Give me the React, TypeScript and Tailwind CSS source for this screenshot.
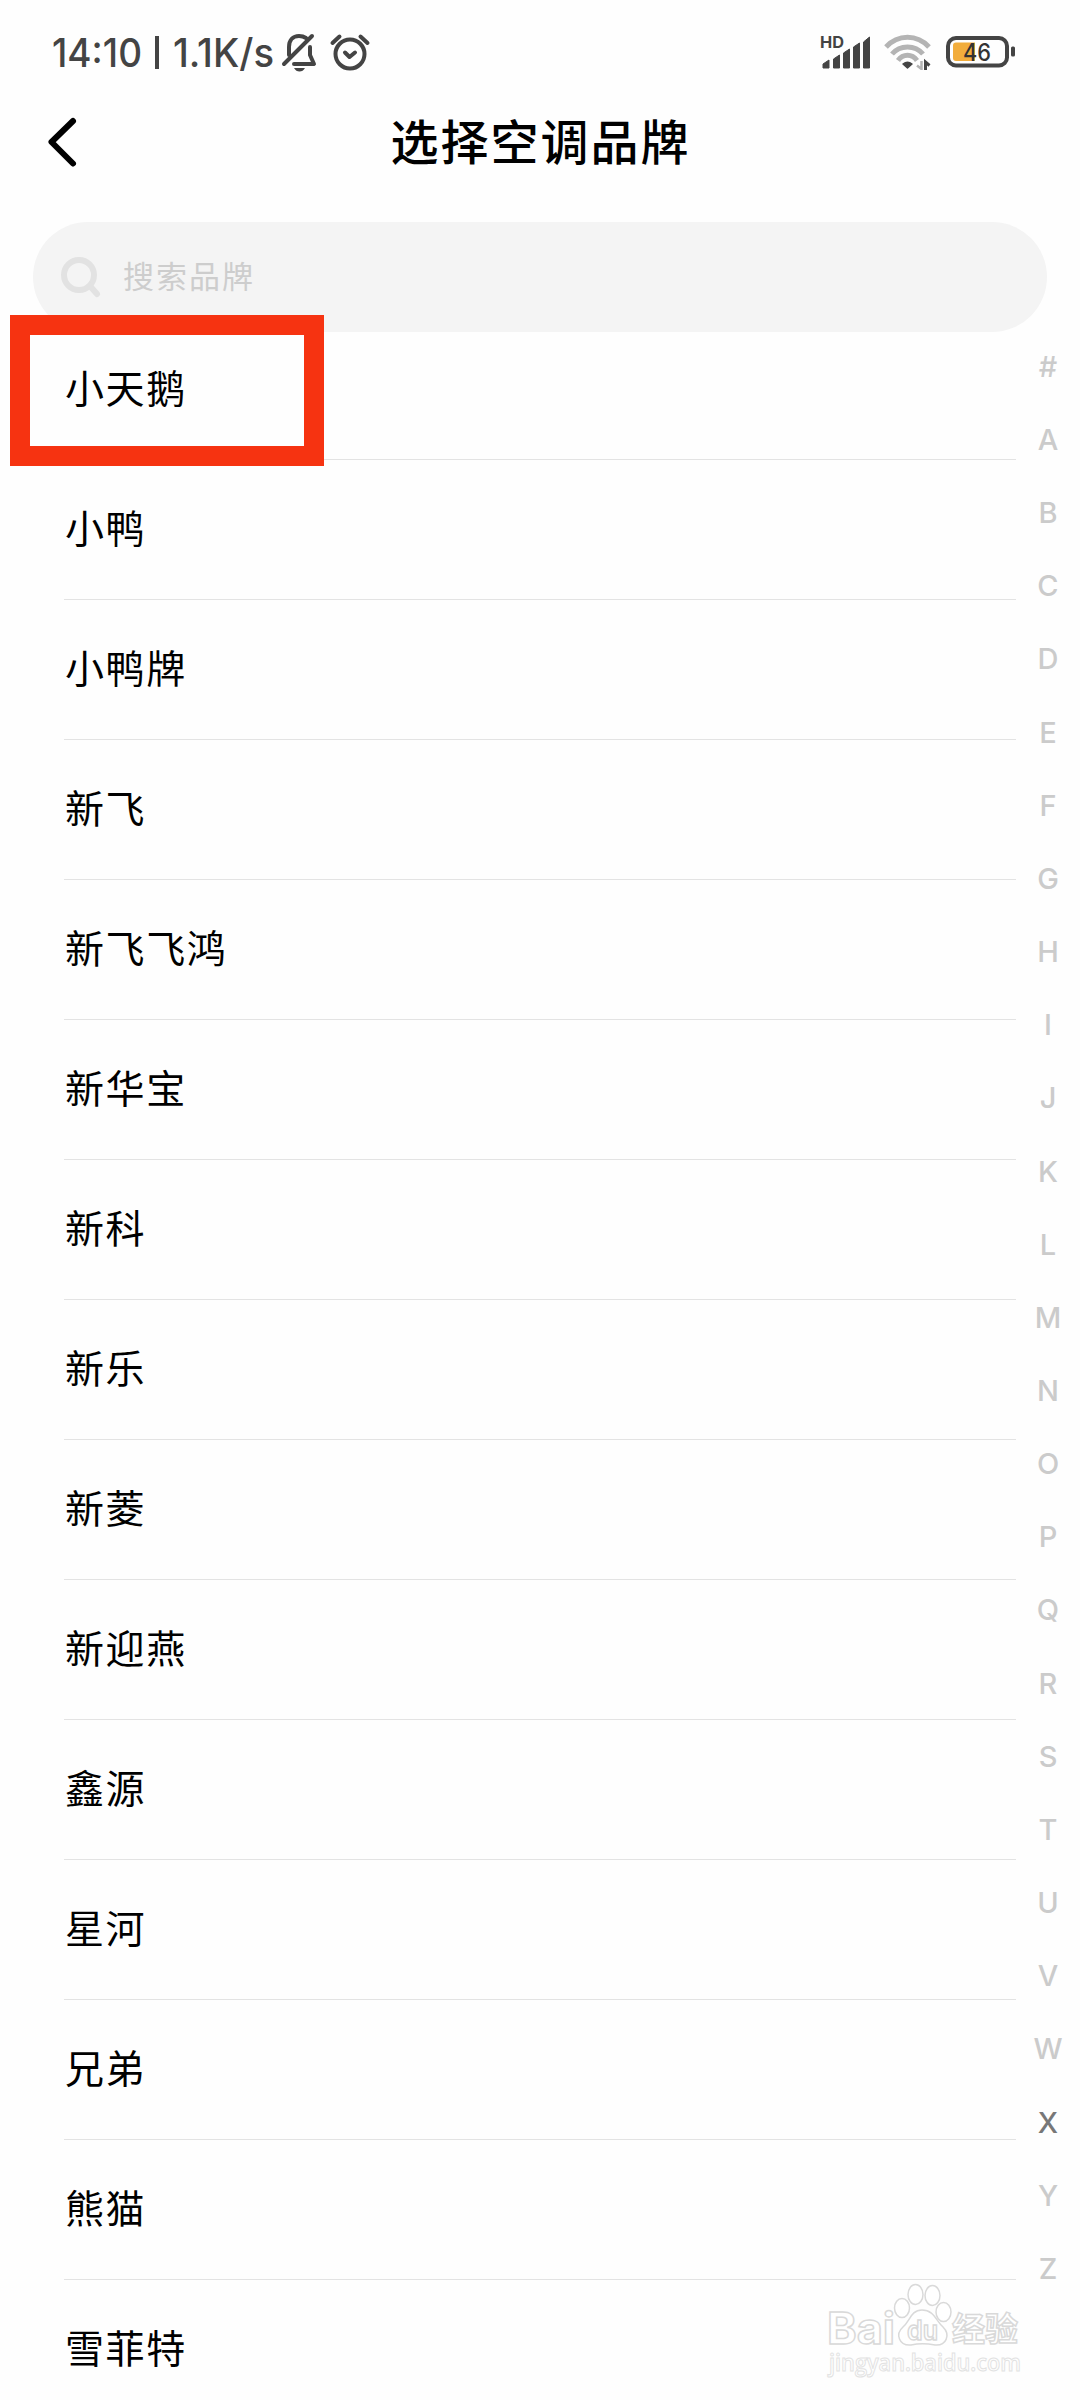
const brands = [
  '小天鹅',
  '小鸭',
  '小鸭牌',
  '新飞',
  '新飞飞鸿',
  '新华宝',
  '新科',
  '新乐',
  '新菱',
  '新迎燕',
  '鑫源',
  '星河',
  '兄弟',
  '熊猫',
  '雪菲特',
]

const letters = '#ABCDEFGHIJKLMNOPQRSTUVWXYZ'.split('')
const activeLetter = 'X'

function StatusBar() {
  return (
    <div className="flex h-[104px] shrink-0 items-center justify-between pr-[64px] pl-[50px] font-['Inter',sans-serif] text-[#444]">
      <div className="flex items-center">
        <svg className="h-[60px] w-[227px]" viewBox="-2 -11 227 60" fill="#444">
          <text x="0" y="34" fontSize="39" fontWeight="500" textLength="90" lengthAdjust="spacingAndGlyphs">14:10</text>
          <rect x="103" y="3" width="4" height="33" />
          <text x="121" y="34" fontSize="39" fontWeight="500" textLength="101" lengthAdjust="spacingAndGlyphs">1.1K/s</text>
        </svg>
        <svg className="ml-[4px] h-[40px] w-[36px]" viewBox="0 0 36 40" fill="none" stroke="#444" strokeWidth="4" strokeLinecap="round" strokeLinejoin="round">
          <path d="M8 23V15C8 8 12 4 18 4Q22 4 25 6" />
          <path d="M29 15V23L33 32H13" />
          <path d="M3 32L31 4" />
          <path d="M13 36H24Q22 39.500 18.500 39.500Q15 39.500 13 36Z" fill="#444" stroke="none" />
        </svg>
        <svg className="ml-[12px] h-[40px] w-[42px]" viewBox="0 0 42 40" fill="none" stroke="#444" strokeWidth="4" strokeLinecap="round" strokeLinejoin="round">
          <circle cx="21" cy="22" r="14.500" />
          <path d="M16 20.500L20.500 25L26 20.500M3.500 11L10.500 4.500M31.500 4.500L38.500 11" />
        </svg>
      </div>
      <div className="flex items-center">
        <svg className="h-[48px] w-[54px]" viewBox="-2 -6 54 48" fill="#444">
          <text x="0" y="14" fontSize="16" fontWeight="700" textLength="24" lengthAdjust="spacingAndGlyphs">HD</text>
          <path d="M3 34V30L9 26V34ZM13.500 34V25L19.500 21V34ZM23.500 34V19L29.500 15V34ZM33.500 34V13L39.500 9V34ZM43.500 34V8L49.500 3V34Z" strokeWidth="1" stroke="#444" strokeLinejoin="round" />
        </svg>
        <svg className="ml-[12px] h-[36px] w-[48px]" viewBox="0 0 48 36" fill="none" stroke="#b4b4b4" strokeWidth="5">
          <path d="M2 13C14 0 33 0 45 13" />
          <path d="M8 20C16 10.500 31 10.500 39 20" />
          <path d="M14 26.500C19 19.500 28 19.500 33 26.500" />
          <path d="M19 30Q23.500 26.500 28 30L23.500 34Z" fill="#444" stroke="#444" strokeWidth="1.500" strokeLinejoin="round" />
          <path d="M37.500 27V35L33 31.500" strokeWidth="2.500" />
          <path d="M41.500 36V28L45.500 31.500" stroke="#444" strokeWidth="3" />
        </svg>
        <svg className="ml-[14px] h-[32px] w-[70px]" viewBox="0 0 70 32">
          <rect x="2" y="2" width="59" height="27.500" rx="8" fill="none" stroke="#444" strokeWidth="4" />
          <path d="M10 6.500H29V25H10Q7 25 7 22V9.500Q7 6.500 10 6.500Z" fill="#f2ad3c" />
          <rect x="65" y="10.500" width="4" height="10" rx="1.500" fill="#444" />
          <text x="17" y="24.500" fontSize="24" fontWeight="500" fill="#333" textLength="28" lengthAdjust="spacingAndGlyphs">46</text>
        </svg>
      </div>
    </div>
  )
}

function Watermark() {
  return (
    <svg
      className="absolute right-[56px] bottom-[10px] h-[110px] w-[200px]"
      viewBox="0 0 200 110"
      fill="#fff"
      stroke="#d9d9d9"
      strokeWidth="1.500"
    >
      <g fontFamily="Inter, sans-serif" fontWeight="700">
        <text x="3" y="64" fontSize="44" textLength="68" lengthAdjust="spacingAndGlyphs">Bai</text>
        <ellipse cx="78" cy="28" rx="7.500" ry="9.500" />
        <ellipse cx="91.500" cy="14.500" rx="7.500" ry="10" />
        <ellipse cx="108.500" cy="15.500" rx="7.500" ry="10" />
        <ellipse cx="119.500" cy="32" rx="7.500" ry="9.500" />
        <path d="M98 30C110 30 112 41 119 47C127 55 122 66 111 65C103 63.500 94 63.500 87 65C75 66 71 54 79 47C86 41 87 30 98 30Z" />
        <text x="83" y="60" fontSize="27" fontWeight="600" textLength="31" lengthAdjust="spacingAndGlyphs">du</text>
      </g>
      <text x="128" y="61" fontSize="33" fontWeight="700" fontFamily="Noto Sans CJK SC, sans-serif">经验</text>
      <text x="5" y="91" fontSize="23" fontWeight="600" fontFamily="Open Sans, sans-serif" stroke="#e2e2e2" strokeWidth="1" textLength="192" lengthAdjust="spacingAndGlyphs">jingyan.baidu.com</text>
    </svg>
  )
}

export default function App() {
  return (
    <div className="relative flex h-[2400px] w-[1080px] flex-col overflow-hidden bg-[#fefefe] font-['Noto_Sans_CJK_SC',sans-serif] text-black">
      <StatusBar />

      <header className="grid h-[76px] shrink-0 grid-cols-[1fr_auto_1fr] items-center px-[46px]">
        <button className="justify-self-start" aria-label="返回">
          <svg className="h-[52px] w-[32px]" viewBox="0 0 32 52" fill="none" stroke="#000" strokeWidth="6" strokeLinecap="round" strokeLinejoin="round">
            <path d="M27 5L5.500 26L27 47.500" />
          </svg>
        </button>
        <h1 className="pb-[6px] pl-px text-[48px] leading-none font-medium tracking-[2px]">选择空调品牌</h1>
      </header>

      <div className="mx-[33px] mt-[42px] flex h-[110px] shrink-0 items-center rounded-full bg-[#f4f4f4] pl-[27px]">
        <svg className="h-[44px] w-[42px]" viewBox="0 0 42 44" fill="none" stroke="#e2e2e2" strokeWidth="6" strokeLinecap="round">
          <circle cx="19" cy="20" r="15" />
          <path d="M30 31L37 39" />
        </svg>
        <span className="ml-[21px] pb-[5px] text-[31px] leading-none tracking-[2px] text-[#cdcdcd]">搜索品牌</span>
      </div>

      <div className="-mt-3 flex">
        <ul className="ml-16 w-[952px]">
          {brands.map((brand) => (
            <li key={brand} className="flex h-[140px] items-center border-b border-[#e3e3e3] pb-[6px] pl-px text-[39px] tracking-[1.6px]">
              {brand}
            </li>
          ))}
        </ul>
        <nav className="ml-2 flex w-[48px] flex-col items-center pt-[10px] font-['Inter',sans-serif] text-[29px] font-medium text-[#cbcbcb]">
          {letters.map((l) => (
            <span key={l} className={`flex h-[73.16px] shrink-0 items-center ${l === activeLetter ? 'text-[#777]' : ''}`}>
              {l}
            </span>
          ))}
        </nav>
      </div>

      {/* highlight around the first brand */}
      <div className="absolute top-[315px] left-[10px] h-[151px] w-[314px] border-[20.5px] border-[#f63311]" />
      <Watermark />
    </div>
  )
}
